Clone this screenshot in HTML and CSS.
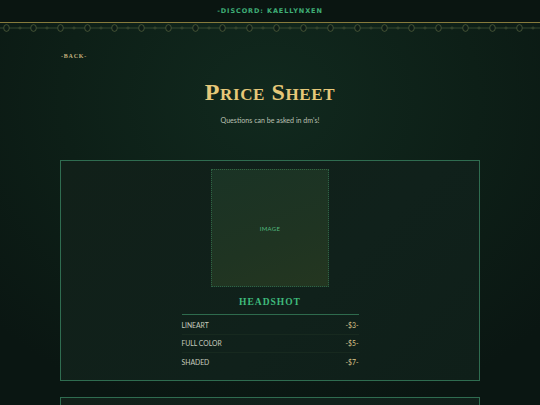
FILE: index.html
```html
<!DOCTYPE html>
<html lang="en">
<head>
    <meta charset="UTF-8">
    <meta name="viewport" content="width=device-width, initial-scale=1.0">
    <title>Price Sheet</title>
    <link rel="stylesheet" href="styles.css">
</head>
<body>
    <header class="topbar">
        <span class="discord">-Discord: kaellynxen</span>
    </header>
    <!-- chain trim under the top bar -->
    <svg class="chain" width="100%" height="10">
        <defs>
            <pattern id="links" x="-7" y="0" width="27" height="10" patternUnits="userSpaceOnUse">
                <line x1="0" y1="5" x2="27" y2="5" stroke="#3f4f34" stroke-width="0.8"/>
                <ellipse cx="13.5" cy="5" rx="2.8" ry="3.4" fill="#0d1c16" stroke="#4e5c3a" stroke-width="0.8"/>
                <circle cx="0" cy="5" r="1" fill="#0d1c16" stroke="#4e5c3a" stroke-width="0.7"/>
                <circle cx="27" cy="5" r="1" fill="#0d1c16" stroke="#4e5c3a" stroke-width="0.7"/>
            </pattern>
        </defs>
        <rect width="100%" height="10" fill="url(#links)"/>
    </svg>

    <div class="container">
        <a class="back" href="#">-Back-</a>
        <h1>Price Sheet</h1>
        <p class="subtitle">Questions can be asked in dm's!</p>

        <div class="card">
            <div class="image">IMAGE</div>
            <h2>Headshot</h2>
            <div class="prices">
                <div class="row"><span>LINEART</span><span class="price">-$3-</span></div>
                <div class="row"><span>FULL COLOR</span><span class="price">-$5-</span></div>
                <div class="row"><span>SHADED</span><span class="price">-$7-</span></div>
            </div>
        </div>

        <div class="card next"></div>
    </div>
</body>
</html>
```

FILE: styles.css
```css
body {
    margin: 0;
    height: 405px;
    font-family: Lato, "Liberation Sans", sans-serif;
    color: #c8ccbf;
    background: radial-gradient(ellipse 70% 80% at 50% 25%, #11291e 0%, #0d1f17 55%, #0a1612 100%);
    overflow: hidden;
}
.topbar {
    height: 22px;
    display: flex;
    align-items: center;
    justify-content: center;
    background-color: #0a1511;
    border-bottom: 1.5px solid #867a3c;
}
.discord {
    font-family: "DejaVu Sans", sans-serif;
    font-weight: bold;
    font-size: 6.5px;
    letter-spacing: 0.9px;
    text-transform: uppercase;
    color: #3fae76;
}
.chain {
    display: block;
}
.container {
    width: 420px;
    margin: 0 auto;
}
.back {
    display: inline-block;
    margin-top: 19px;
    margin-left: 1px;
    font-family: "Liberation Serif", serif;
    font-weight: bold;
    font-size: 6px;
    line-height: 8px;
    letter-spacing: 0.8px;
    text-transform: uppercase;
    color: #c4b27e;
    text-decoration: none;
}
h1 {
    margin: 17px 0 0;
    text-align: center;
    font-family: "Liberation Serif", serif;
    font-variant: small-caps;
    font-weight: bold;
    font-size: 24px;
    line-height: 28px;
    letter-spacing: 0.6px;
    color: #e6c879;
}
.subtitle {
    margin: 10px 0 0;
    text-align: center;
    font-size: 7.1px;
    line-height: 10px;
    color: #b9c0b2;
}
.card {
    margin-top: 34px;
    box-sizing: border-box;
    padding: 8px 0 9px;
    border: 1px solid #2f6c50;
    background: linear-gradient(135deg, #112019, #10211b 60%, #0f1f19);
    display: flex;
    flex-direction: column;
    align-items: center;
}
.image {
    width: 118px;
    height: 118px;
    box-sizing: border-box;
    border: 1px dotted #2d6446;
    background: linear-gradient(160deg, #1a3325, #1f3422 60%, #243620);
    display: flex;
    align-items: center;
    justify-content: center;
    font-size: 6px;
    letter-spacing: 0.3px;
    color: #52b97f;
}
h2 {
    width: 177px;
    margin: 8px 0 0;
    padding-bottom: 5px;
    text-align: center;
    border-bottom: 1.5px solid #2e6b4d;
    font-family: "Liberation Serif", serif;
    font-weight: bold;
    font-size: 9.5px;
    line-height: 14px;
    letter-spacing: 1px;
    text-transform: uppercase;
    color: #3fbb7c;
}
.prices {
    width: 177px;
    padding-top: 1px;
}
.row {
    height: 17.5px;
    display: flex;
    align-items: center;
    justify-content: space-between;
    font-size: 6.8px;
    border-bottom: 1px solid #17291f;
}
.row:last-child {
    border-bottom: none;
}
.price {
    color: #d9c48a;
}
.card.next {
    margin-top: 16px;
    height: 40px;
    padding: 0;
}
```
